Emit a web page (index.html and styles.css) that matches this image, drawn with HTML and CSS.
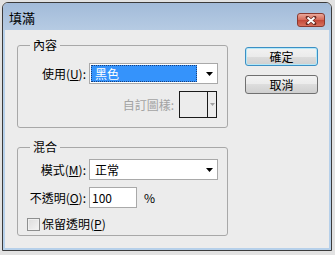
FILE: index.html
```html
<!DOCTYPE html>
<html lang="zh-Hant">
<head>
    <meta charset="UTF-8">
    <title>填滿</title>
    <link rel="stylesheet" href="styles.css">
</head>
<body>
    <div class="window">
        <div class="titlebar">
            <span class="title">填滿</span>
            <span class="close">
                <svg width="12" height="9" viewBox="0 0 12 9">
                    <path d="M2.5 1.5L9.5 7.5M9.5 1.5L2.5 7.5" stroke="#6b2a22" stroke-width="3.6" stroke-linecap="round"/>
                    <path d="M2.5 1.5L9.5 7.5M9.5 1.5L2.5 7.5" stroke="#fff" stroke-width="2"/>
                </svg>
            </span>
        </div>

        <div class="client">
            <div class="groups">
                <!-- 內容 -->
                <fieldset class="group group-content">
                    <legend>內容</legend>
                    <div class="row">
                        <span class="lbl">使用(<u>U</u>):</span>
                        <div class="select">
                            <span class="sel-value selected">黑色</span>
                            <svg class="arrow" width="7" height="4" viewBox="0 0 7 4"><path d="M0 0h7L3.5 4z" fill="#000"/></svg>
                        </div>
                    </div>
                    <div class="row row-pattern">
                        <span class="lbl-disabled">自訂圖樣:</span>
                        <div class="pattern">
                            <span class="pattern-swatch"></span>
                            <span class="pattern-drop">
                                <svg width="5" height="3" viewBox="0 0 5 3"><path d="M0 0h5L2.5 3z" fill="#a0a0a0"/></svg>
                            </span>
                        </div>
                    </div>
                </fieldset>

                <!-- 混合 -->
                <fieldset class="group group-blend">
                    <legend>混合</legend>
                    <div class="row">
                        <span class="lbl">模式(<u>M</u>):</span>
                        <div class="select">
                            <span class="sel-value">正常</span>
                            <svg class="arrow" width="7" height="4" viewBox="0 0 7 4"><path d="M0 0h7L3.5 4z" fill="#000"/></svg>
                        </div>
                    </div>
                    <div class="row row-opacity">
                        <span class="lbl">不透明(<u>O</u>):</span>
                        <div class="textbox">100</div>
                        <span class="unit">%</span>
                    </div>
                    <div class="row row-check">
                        <span class="checkbox"></span>
                        <span>保留透明(<u>P</u>)</span>
                    </div>
                </fieldset>
            </div>

            <div class="buttons">
                <button class="btn btn-default">確定</button>
                <button class="btn">取消</button>
            </div>
        </div>
    </div>
</body>
</html>
```

FILE: styles.css
```css
body {
    margin: 0;
    padding: 2px;
    background-color: #e2e2e2;
    font-family: "Noto Sans CJK TC", "Noto Sans", sans-serif;
    font-size: 12px;
    color: #000;
}

.window {
    width: 330px;
    height: 249px;
    box-sizing: border-box;
    border: 1px solid #3b3b3b;
    border-radius: 6px 6px 0 0;
    background-color: #ececec;
    display: flex;
    flex-direction: column;
    overflow: hidden;
}

.titlebar {
    height: 27px;
    flex: none;
    display: flex;
    justify-content: space-between;
    align-items: flex-start;
    padding: 0 6px;
    background: linear-gradient(#a2bbd9, #b6cbe3);
}

.title {
    margin-top: 7px;
    font-size: 13px;
    line-height: 16px;
}

.close {
    margin-top: 10px;
    width: 28px;
    height: 14px;
    box-sizing: border-box;
    border: 1px solid #8a3a30;
    border-radius: 3px;
    background: linear-gradient(#eaa89a, #d66a58 48%, #c3493a 52%, #d8705d);
    display: flex;
    align-items: center;
    justify-content: center;
}

.client {
    flex: 1;
    display: flex;
    padding: 7px 0 0 12px;
    border: 2px solid #b6d0ea;
    border-top: none;
}

.groups {
    width: 211px;
    display: flex;
    flex-direction: column;
}

.group {
    margin: 0;
    min-width: 0;
    border: 1px solid #a8a8a8;
    border-radius: 3px;
}

.group legend {
    margin-left: 3px;
    padding: 0 3px;
    line-height: 16px;
}

.group-content {
    padding: 10px 9px 9px 9px;
}

.group-blend {
    margin-top: 11px;
    padding: 4px 9px 3px 9px;
}

.row {
    display: flex;
    align-items: center;
    gap: 3px;
    line-height: 16px;
}

.lbl {
    width: 59px;
    text-align: right;
    white-space: nowrap;
}

.select {
    width: 129px;
    height: 21px;
    box-sizing: border-box;
    border: 1px solid #a9a9a9;
    background-color: #fff;
    display: flex;
    align-items: center;
    padding: 1px 4px 1px 1px;
}

.sel-value {
    width: 106px;
    height: 17px;
    box-sizing: border-box;
    padding-left: 4px;
    line-height: 17px;
}

.selected {
    background-color: #3593fb;
    color: #fff;
    outline: 1px dotted #1a3f7a;
    outline-offset: -1px;
}

.arrow {
    margin-left: auto;
}

.row-pattern {
    justify-content: flex-end;
    gap: 5px;
    margin-top: 7px;
    padding-right: 1px;
}

.lbl-disabled {
    color: #a3a3a3;
}

.pattern {
    width: 38px;
    height: 27px;
    box-sizing: border-box;
    border: 1px solid #1a1a1a;
    display: flex;
}

.pattern-swatch {
    width: 27px;
}

.pattern-drop {
    flex: 1;
    border-left: 1px solid #1a1a1a;
    display: flex;
    align-items: center;
    justify-content: center;
}

.row-opacity {
    margin-top: 7px;
}

.textbox {
    width: 48px;
    height: 21px;
    box-sizing: border-box;
    border: 1px solid #a9a9a9;
    background-color: #fff;
    padding-left: 2px;
    line-height: 19px;
}

.unit {
    margin-left: 4px;
}

.row-check {
    margin-top: 8px;
    gap: 2px;
}

.checkbox {
    width: 13px;
    height: 13px;
    box-sizing: border-box;
    border: 1px solid #8e8f8f;
    background: linear-gradient(135deg, #dcdcdc, #f4f4f4);
    box-shadow: inset 0 0 0 1px #f0f0f0;
}

.buttons {
    margin-left: 17px;
    padding-top: 10px;
    display: flex;
    flex-direction: column;
    gap: 9px;
}

.btn {
    width: 73px;
    height: 19px;
    padding: 0;
    border: 1px solid #707070;
    border-radius: 3px;
    background: linear-gradient(#f2f2f2, #ebebeb 50%, #dddddd 50%, #cfcfcf);
    font-family: inherit;
    font-size: 12px;
    line-height: 16px;
    color: #000;
}

.btn-default {
    border-color: #3c8fc4;
    box-shadow: inset 0 0 0 1px #b3e8f8;
}
```
